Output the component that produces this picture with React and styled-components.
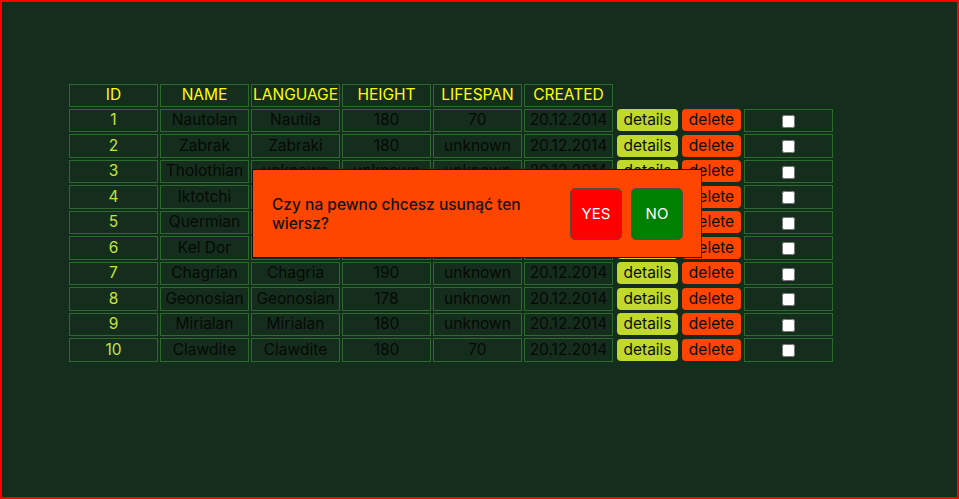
import styled, { createGlobalStyle } from "styled-components";

const GlobalStyle = createGlobalStyle`
  html, body {
    margin: 0;
    padding: 0;
    background: #152d1c;
  }
  * {
    font-family: "Inter", "Noto Sans", sans-serif;
  }
`;

const Page = styled.div`
  box-sizing: border-box;
  min-height: 100vh;
  border: 2px solid #ff0000;
  background: #152d1c;
  padding: 80px 0 0 65px;
`;

const Table = styled.table`
  table-layout: fixed;
  width: 768px;
  border-collapse: separate;
  border-spacing: 2px;
  font-size: 15.5px;
`;

const Col = styled.col`
  width: ${(p) => p.$w || 89}px;
`;

const Th = styled.th`
  box-sizing: border-box;
  height: 22.5px;
  padding: 0;
  border: 1px solid #2c6a2e;
  color: #ffff00;
  font-weight: 400;
  text-align: center;
  line-height: 18px;
  white-space: nowrap;
  overflow: hidden;
`;

const Td = styled.td`
  box-sizing: border-box;
  height: 23.5px;
  padding: 0;
  border: ${(p) => (p.$plain ? "none" : "1px solid #2c6a2e")};
  color: ${(p) => (p.$accent ? "#c4e43c" : "#050a06")};
  text-align: center;
  line-height: 20px;
  white-space: nowrap;
  overflow: hidden;
`;

const Actions = styled.div`
  display: flex;
  gap: 4px;
  padding-left: 2px;
`;

const ActionButton = styled.button`
  height: 22px;
  width: ${(p) => (p.$danger ? 59 : 61)}px;
  padding: 0;
  border: none;
  border-radius: 4px;
  background: ${(p) => (p.$danger ? "#ff4500" : "#c0d92a")};
  color: #0d0d0d;
  font-size: 15.5px;
  line-height: 22px;
`;

const Check = styled.input`
  margin: 0;
  vertical-align: middle;
`;

const Dialog = styled.div`
  position: fixed;
  left: 252px;
  top: 169px;
  box-sizing: border-box;
  width: 450px;
  height: 89px;
  background: #ff4500;
  border: 1px solid #111;
  display: flex;
  align-items: center;
  justify-content: space-between;
  padding: 0 18px 0 19px;
`;

const Question = styled.p`
  margin: 0;
  width: 270px;
  font-size: 15.5px;
  font-weight: 500;
  line-height: 19px;
  color: #141414;
`;

const Choices = styled.div`
  display: flex;
  gap: 9px;
`;

const Choice = styled.button`
  width: 52px;
  height: 52px;
  border: 1px solid #5a4a40;
  border-radius: 5px;
  background: ${(p) => (p.$yes ? "#ff0000" : "#008000")};
  color: #ffffff;
  font-size: 15px;
  padding: 0;
`;

const rows = [
  [1, "Nautolan", "Nautila", "180", "70"],
  [2, "Zabrak", "Zabraki", "180", "unknown"],
  [3, "Tholothian", "unknown", "unknown", "unknown"],
  [4, "Iktotchi", "Iktotchese", "180", "unknown"],
  [5, "Quermian", "Quermian", "240", "86"],
  [6, "Kel Dor", "Kel Dor", "180", "70"],
  [7, "Chagrian", "Chagria", "190", "unknown"],
  [8, "Geonosian", "Geonosian", "178", "unknown"],
  [9, "Mirialan", "Mirialan", "180", "unknown"],
  [10, "Clawdite", "Clawdite", "180", "70"],
];

export default function App() {
  return (
    <>
      <GlobalStyle />
      <Page>
        <Table>
          <colgroup>
            <Col />
            <Col />
            <Col />
            <Col />
            <Col />
            <Col />
            <Col $w={127} />
            <Col />
          </colgroup>
          <thead>
            <tr>
              <Th>ID</Th>
              <Th>NAME</Th>
              <Th>LANGUAGE</Th>
              <Th>HEIGHT</Th>
              <Th>LIFESPAN</Th>
              <Th>CREATED</Th>
            </tr>
          </thead>
          <tbody>
            {rows.map(([id, name, lang, height, life]) => (
              <tr key={id}>
                <Td $accent>{id}</Td>
                <Td>{name}</Td>
                <Td>{lang}</Td>
                <Td>{height}</Td>
                <Td>{life}</Td>
                <Td>20.12.2014</Td>
                <Td $plain>
                  <Actions>
                    <ActionButton>details</ActionButton>
                    <ActionButton $danger>delete</ActionButton>
                  </Actions>
                </Td>
                <Td>
                  <Check type="checkbox" />
                </Td>
              </tr>
            ))}
          </tbody>
        </Table>
        <Dialog>
          <Question>Czy na pewno chcesz usunąć ten wiersz?</Question>
          <Choices>
            <Choice $yes>YES</Choice>
            <Choice>NO</Choice>
          </Choices>
        </Dialog>
      </Page>
    </>
  );
}
